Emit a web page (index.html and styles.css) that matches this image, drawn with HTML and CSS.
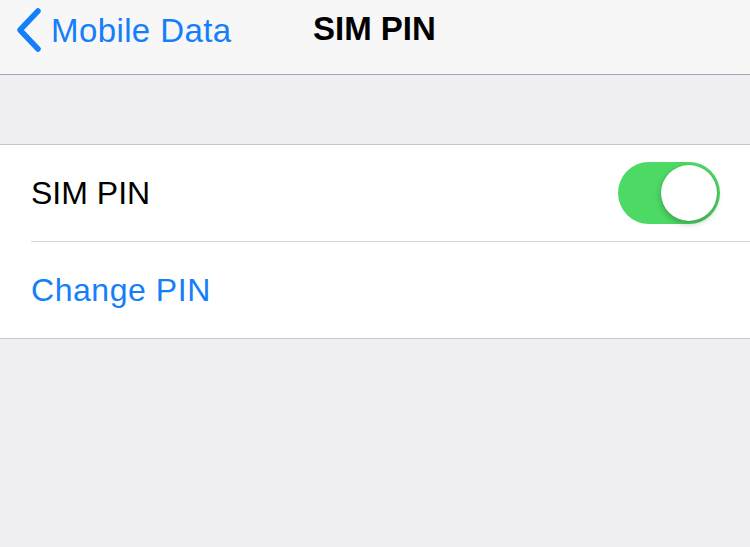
FILE: index.html
```html
<!DOCTYPE html>
<html>
<head>
<meta charset="utf-8">
<link rel="stylesheet" href="styles.css">
</head>
<body>
<div class="nav">
  <div class="back">
    <svg class="chev" width="28" height="44" viewBox="0 0 28 44"><path d="M24 3 L6 22 L24 41" fill="none" stroke="#147efb" stroke-width="5.5" stroke-linecap="round" stroke-linejoin="round"/></svg>
    <span class="back-label">Mobile Data</span>
  </div>
  <div class="title">SIM PIN</div>
</div>
<div class="gap"></div>
<div class="group">
  <div class="row">
    <span class="label">SIM PIN</span>
    <div class="switch"><div class="knob"></div></div>
  </div>
  <div class="row link-row">
    <span class="link">Change PIN</span>
  </div>
</div>
<div class="rest"></div>
</body>
</html>
```
FILE: styles.css
```css
html, body {
  margin: 0;
  padding: 0;
  background: #efeff4;
  font-family: "Liberation Sans", Arial, sans-serif;
}
.nav {
  height: 74px;
  background: #f7f7f8;
  border-bottom: 1px solid #a7a7aa;
  position: relative;
  display: flex;
  align-items: center;
}
.back {
  display: flex;
  align-items: center;
  padding-left: 14px;
  height: 100%;
  color: #147efb;
}
.chev {
  display: block;
  margin-right: 9px;
  margin-top: -14px;
}
.back-label {
  font-size: 33px;
  letter-spacing: 0.4px;
  margin-top: -12px;
}
.title {
  position: absolute;
  left: 313px;
  top: 10px;
  font-size: 33px;
  font-weight: bold;
  color: #000;
}
.gap {
  height: 69px;
}
.group {
  background: #fff;
  border-top: 1px solid #c8c7cc;
  border-bottom: 1px solid #c8c7cc;
  padding-left: 31px;
}
.row {
  height: 96px;
  display: flex;
  align-items: center;
  padding-right: 30px;
}
.row + .row {
  border-top: 1px solid #d6d6da;
}
.label {
  font-size: 32px;
  color: #000;
  flex: 1;
}
.link {
  font-size: 32px;
  letter-spacing: 0.55px;
  color: #147efb;
}
.switch {
  width: 102px;
  height: 62px;
  border-radius: 31px;
  background: #4cd964;
  position: relative;
}
.knob {
  position: absolute;
  right: 3px;
  top: 3px;
  width: 56px;
  height: 56px;
  border-radius: 50%;
  background: #fff;
  box-shadow: 0 3px 6px rgba(0,0,0,0.25), 0 0 1px rgba(0,0,0,0.2);
}
```
